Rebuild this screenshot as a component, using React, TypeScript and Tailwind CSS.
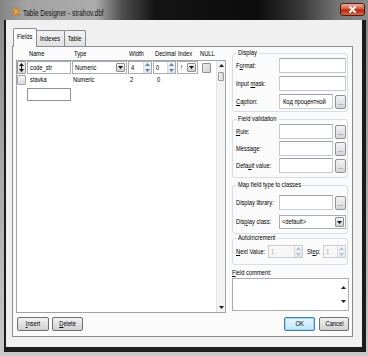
import React from "react";

const ui = "font-['Liberation_Sans',Arial,sans-serif]";

// the reference dialog is squeezed sideways, so text is drawn narrow
function T({ children, className = "" }: { children: React.ReactNode; className?: string }) {
  return <span className={`inline-block whitespace-nowrap origin-left scale-x-[0.72] ${className}`}>{children}</span>;
}

function TC({ children }: { children: React.ReactNode }) {
  return <span className="inline-block whitespace-nowrap origin-center scale-x-[0.72]">{children}</span>;
}

function Tri({ up = false, className = "" }: { up?: boolean; className?: string }) {
  return (
    <svg width="5" height="3" viewBox="0 0 5 3" className={className}>
      <path d={up ? "M0 3 L2.5 0 L5 3 Z" : "M0 0 L5 0 L2.5 3 Z"} fill="currentColor" />
    </svg>
  );
}

function TextBox({ className = "", children }: { className?: string; children?: React.ReactNode }) {
  return (
    <div className={`h-[15px] shrink-0 bg-white border border-[#c5cad0] border-t-[#9ea3aa] flex items-center px-[3px] overflow-hidden ${className}`}>
      {children && <T>{children}</T>}
    </div>
  );
}

function Dots() {
  return (
    <div className="ml-[2px] w-[11px] h-[14px] shrink-0 border border-[#8f9091] rounded-[2px] bg-gradient-to-b from-[#f4f4f4] to-[#d6d6d6] flex items-end justify-center pb-[2px] text-[6px] leading-[6px]">
      ...
    </div>
  );
}

function SpinBtns({ muted = false }: { muted?: boolean }) {
  return (
    <div className={`ml-auto w-[8px] h-full flex flex-col border-l border-[#d9dde2] ${muted ? "text-[#b9c4cf]" : "text-[#5f84a8]"}`}>
      <div className="flex-1 flex items-center justify-center bg-gradient-to-b from-[#f7f9fb] to-[#e6ecf2]"><Tri up /></div>
      <div className="flex-1 flex items-center justify-center bg-gradient-to-b from-[#eef2f6] to-[#dde4ec]"><Tri /></div>
    </div>
  );
}

function Spin({ className = "", value, disabled = false }: { className?: string; value: string; disabled?: boolean }) {
  return (
    <div className={`shrink-0 border flex items-stretch ${disabled ? "bg-[#f7f7f7] border-[#c9ccd1] text-[#a8a8a8]" : "bg-white border-[#abadb3]"} ${className}`}>
      <span className="pl-[2px] self-center"><T>{value}</T></span>
      <SpinBtns muted={disabled} />
    </div>
  );
}

function DropBtn() {
  return (
    <div className="ml-auto my-[1px] mr-[1px] w-[9px] shrink-0 border border-[#8f9091] rounded-[1px] bg-gradient-to-b from-[#f3f3f3] to-[#cfcfcf] flex items-center justify-center text-[#111]">
      <Tri />
    </div>
  );
}

function Combo({ className = "", children }: { className?: string; children: React.ReactNode }) {
  return (
    <div className={`shrink-0 bg-white border border-[#abadb3] flex items-stretch overflow-hidden ${className}`}>
      <span className="pl-[2px] self-center w-0 grow"><T>{children}</T></span>
      <DropBtn />
    </div>
  );
}

function Btn({ children, className = "", primary = false }: { children: React.ReactNode; className?: string; primary?: boolean }) {
  return (
    <div
      className={`h-[14px] shrink-0 rounded-[2px] border flex items-center justify-center ${
        primary
          ? "border-[#3c7fb1] bg-gradient-to-b from-[#eaf6fd] to-[#bee6fd] shadow-[inset_0_0_0_1px_#a7d9f5]"
          : "border-[#707070] bg-gradient-to-b from-[#f2f2f2] to-[#d0d0d0]"
      } ${className}`}
    >
      <TC>{children}</TC>
    </div>
  );
}

function Row({ label, children }: { label: React.ReactNode; children: React.ReactNode }) {
  return (
    <div className="flex items-center">
      <span className="w-[43px] shrink-0"><T>{label}</T></span>
      {children}
    </div>
  );
}

function Group({ title, legendW, className = "", children }: { title: string; legendW: string; className?: string; children: React.ReactNode }) {
  return (
    <fieldset className={`w-[116px] border border-[#d5dfe5] rounded-[3px] pl-[3px] pr-[1px] flex flex-col ${className}`}>
      <legend className={`ml-[1px] px-[1px] leading-[8px] ${legendW}`}><T>{title}</T></legend>
      {children}
    </fieldset>
  );
}

function FoxIcon() {
  return (
    <svg width="10" height="11" viewBox="0 0 10 11" className="ml-[11px] mt-[6px]">
      <defs>
        <linearGradient id="fx" x1="0" y1="0" x2="1" y2="1">
          <stop offset="0" stopColor="#ffe14a" />
          <stop offset="1" stopColor="#f07a12" />
        </linearGradient>
      </defs>
      <path d="M1 10 L3.5 5.5 L1.5 1 L5 4 L9 1.5 L6.5 6 L9 10 L5 7.5 Z" fill="url(#fx)" stroke="#c85a08" strokeWidth="0.5" />
    </svg>
  );
}

export default function App() {
  return (
    <div className={`w-[368px] h-[356px] overflow-hidden flex flex-col text-[8px] leading-[8px] text-black ${ui}`}>
      {/* title bar */}
      <div className="h-[20px] shrink-0 flex items-start bg-[linear-gradient(90deg,#838383_0%,#a3a3a3_7%,#ababab_26%,#505050_33%,#141414_42%,#0c0c0c_70%,#393939_82%,#767676_92%,#8a8a8a_100%)]">
        <FoxIcon />
        <span className="ml-[2px] mt-[8px] text-[9px] leading-[10px] text-[#151515]">
          <T>Table Designer - strahov.dbf</T>
        </span>
        <div className="ml-auto mr-[3px] mt-[3px] w-[25px] h-[13px] rounded-[3px] border border-[#4a1c14] bg-[linear-gradient(180deg,#eab0a0_0%,#d5634a_40%,#b8260f_55%,#d86a3e_100%)] flex items-center justify-center">
          <svg width="7" height="7" viewBox="0 0 7 7">
            <path d="M1 1 L6 6 M6 1 L1 6" stroke="#fff" strokeWidth="1.8" strokeLinecap="round" />
          </svg>
        </div>
      </div>

      {/* frame + client */}
      <div className="flex-1 flex pl-[4px] pr-[2px] pb-[4px] bg-[linear-gradient(180deg,#8d8d8d,#c9c9c9)]">
        <div className="flex-1 border-l-2 border-r-4 border-b-[5px] border-[#1c1c1c] bg-[#f0f0f0] pt-[8px] pl-[6px] flex flex-col">
          {/* tabs */}
          <div className="flex items-end h-[18px] pl-[1px]">
            <div className="relative z-10 h-[19px] -mb-[1px] w-[24px] border border-b-0 border-[#898c95] rounded-t-[2px] bg-[#fbfbfb] flex items-center justify-center pb-[2px]">
              <TC>Fields</TC>
            </div>
            <div className="h-[16px] w-[29px] -ml-[1px] border border-b-0 border-[#898c95] rounded-t-[2px] bg-gradient-to-b from-[#f2f2f2] to-[#e1e1e1] flex items-center justify-center">
              <TC>Indexes</TC>
            </div>
            <div className="h-[16px] w-[22px] -ml-[1px] border border-b-0 border-[#898c95] rounded-t-[2px] bg-gradient-to-b from-[#f2f2f2] to-[#e1e1e1] flex items-center justify-center">
              <TC>Table</TC>
            </div>
          </div>

          {/* panel */}
          <div className="w-[341px] h-[291px] border border-[#898c95] bg-[#fbfbfb] flex flex-col pt-[1px] pl-[3px]">
            <div className="flex">
              {/* fields grid */}
              <div className="w-[210px] flex flex-col">
                <div className="h-[12px] flex items-center pl-[11px]">
                  <span className="w-[45px] pl-[2px]"><T>Name</T></span>
                  <span className="w-[56px] pl-[2px]"><T>Type</T></span>
                  <span className="w-[25px] pl-[1px]"><T>Width</T></span>
                  <span className="w-[24px] pl-[2px]"><T>Decimal</T></span>
                  <span className="w-[22px] pl-[1px]"><T>Index</T></span>
                  <span className="pl-[1px]"><T>NULL</T></span>
                </div>
                <div className="h-[253px] border border-[#9ea3aa] bg-white flex">
                  <div className="flex-1 flex flex-col">
                    <div className="h-[13px] flex items-stretch">
                      <div className="w-[9px] border border-[#9a9a9a] rounded-[1px] bg-gradient-to-b from-[#f4f4f4] to-[#d8d8d8] flex items-center justify-center">
                        <svg width="5" height="9" viewBox="0 0 5 9">
                          <path d="M2.5 0 L5 3 L0 3 Z M2.5 9 L5 6 L0 6 Z M2 3 H3 V6 H2 Z" fill="#111" />
                        </svg>
                      </div>
                      <div className="ml-[1px] w-[44px] border border-[#abadb3] flex items-center pl-[2px]"><T>code_str</T></div>
                      <Combo className="ml-[1px] w-[55px]">Numeric</Combo>
                      <Spin className="ml-[1px] w-[24px]" value="4" />
                      <Spin className="ml-[1px] w-[23px]" value="0" />
                      <Combo className="ml-[1px] w-[21px]">↑</Combo>
                      <div className="w-[16px] flex items-center justify-center">
                        <div className="w-[9px] h-[10px] border border-[#8f8f8f] rounded-[1px] bg-gradient-to-br from-[#f0f0f0] to-[#d2d2d2]" />
                      </div>
                    </div>
                    <div className="h-[11px] flex items-center">
                      <div className="w-[9px] h-[10px] border border-[#a7a7a7] rounded-[1px] bg-gradient-to-b from-[#f4f4f4] to-[#dcdcdc]" />
                      <span className="ml-[1px] w-[44px] pl-[3px]"><T>stavka</T></span>
                      <span className="ml-[1px] w-[55px] pl-[1px]"><T>Numeric</T></span>
                      <span className="ml-[1px] w-[24px] pl-[2px]"><T>2</T></span>
                      <span className="ml-[1px] w-[23px] pl-[4px]"><T>0</T></span>
                    </div>
                    <div className="mt-[3px] ml-[10px] w-[44px] h-[13px] border border-[#8e9399] bg-white" />
                  </div>
                  <div className="w-[9px] flex flex-col bg-[#f3f3f3] border-l border-[#e4e4e4] text-[#222]">
                    <div className="h-[9px] flex items-center justify-center"><Tri up /></div>
                    <div className="mt-[2px] mx-[1px] h-[9px] border border-[#9a9a9a] rounded-[1px] bg-gradient-to-r from-[#f3f3f3] to-[#d6d6d6]" />
                    <div className="mt-auto h-[9px] flex items-center justify-center"><Tri /></div>
                  </div>
                </div>
              </div>

              {/* properties */}
              <div className="ml-[6px] w-[117px] pt-[1px] flex flex-col">
                <Group title="Display" legendW="w-[22px]" className="pb-[2px]">
                  <div className="pt-[1px] flex flex-col gap-[3px]">
                    <Row label={<>F<u>o</u>rmat:</>}><TextBox className="w-[67px]" /></Row>
                    <Row label={<>Input <u>m</u>ask:</>}><TextBox className="w-[67px]" /></Row>
                    <Row label={<><u>C</u>aption:</>}>
                      <TextBox className="w-[54px]">Код процентной</TextBox>
                      <Dots />
                    </Row>
                  </div>
                </Group>
                <Group title="Field validation" legendW="w-[42px]" className="mt-[3px] pb-[4px]">
                  <div className="pt-[1px] flex flex-col gap-[2px]">
                    <Row label={<><u>R</u>ule:</>}><TextBox className="w-[54px]" /><Dots /></Row>
                    <Row label={<>Messa<u>g</u>e:</>}><TextBox className="w-[54px]" /><Dots /></Row>
                    <Row label={<>Defa<u>u</u>lt value:</>}><TextBox className="w-[54px]" /><Dots /></Row>
                  </div>
                </Group>
                <Group title="Map field type to classes" legendW="w-[65px]" className="mt-[3px] pb-[4px]">
                  <div className="pt-[6px] flex flex-col gap-[5px]">
                    <Row label="Display library:"><TextBox className="w-[54px]" /><Dots /></Row>
                    <Row label={<>Dis<u>p</u>lay class:</>}>
                      <Combo className="w-[67px] h-[14px]">&lt;default&gt;</Combo>
                    </Row>
                  </div>
                </Group>
                <Group title="AutoIncrement" legendW="w-[40px]" className="pb-[6px]">
                  <div className="pt-[3px] flex items-center">
                    <span className="w-[32px]"><T><u>N</u>ext Value:</T></span>
                    <Spin className="w-[35px] h-[13px]" value="1" disabled />
                    <span className="ml-[4px] w-[16px]"><T>St<u>e</u>p:</T></span>
                    <Spin className="w-[23px] h-[13px]" value="1" disabled />
                  </div>
                </Group>
                <span className="mt-[4px]"><T><u>F</u>ield comment:</T></span>
                <div className="mt-[1px] h-[33px] border border-[#abadb3] bg-white flex justify-end pr-[2px] text-[#222]">
                  <div className="flex flex-col justify-between py-[7px]">
                    <Tri up />
                    <Tri />
                  </div>
                </div>
              </div>
            </div>

            {/* buttons */}
            <div className="mt-[4px] flex pl-[1px] pr-[3px]">
              <Btn className="w-[32px]"><u>I</u>nsert</Btn>
              <Btn className="ml-[3px] w-[31px]"><u>D</u>elete</Btn>
              <Btn primary className="ml-auto w-[31px]">OK</Btn>
              <Btn className="ml-[4px] w-[30px]">Cancel</Btn>
            </div>
          </div>
        </div>
      </div>
    </div>
  );
}
